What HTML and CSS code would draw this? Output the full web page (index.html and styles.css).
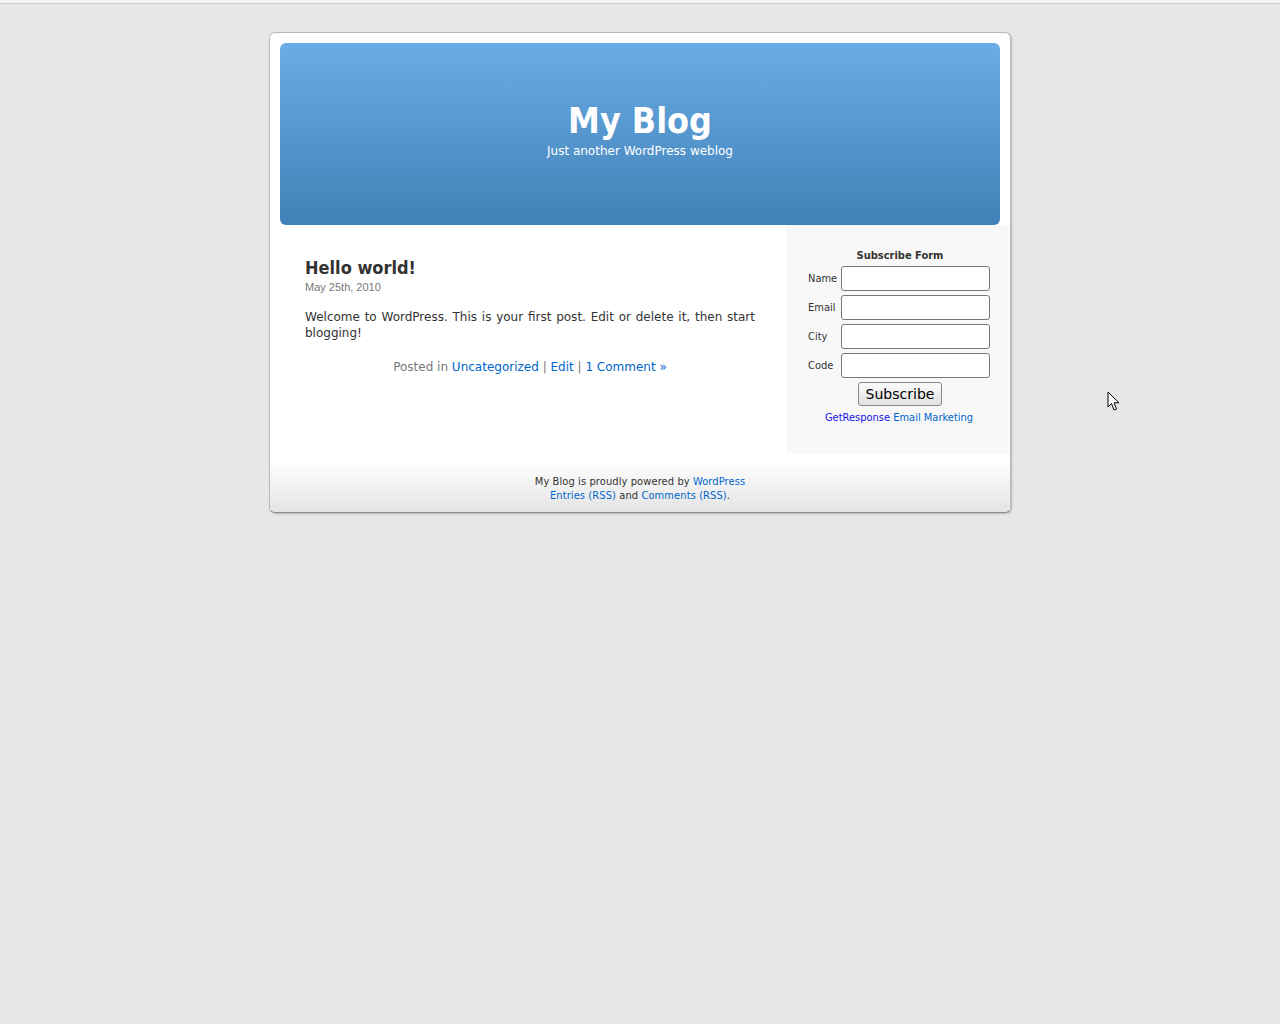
FILE: index.html
```html
<!DOCTYPE html>
<html lang="en">
<head>
<meta charset="utf-8">
<title>My Blog</title>
<link rel="stylesheet" href="styles.css">
</head>
<body>
<div class="topline"></div>
<div class="page">
  <header class="header">
    <h1 class="blog-title">My Blog</h1>
    <div class="blog-desc">Just another WordPress weblog</div>
  </header>
  <div class="columns">
    <main class="content">
      <article class="post">
        <h2 class="post-title">Hello world!</h2>
        <div class="post-date">May 25th, 2010</div>
        <p class="post-entry">Welcome to WordPress. This is your first post. Edit or delete it, then start blogging!</p>
        <p class="post-meta">Posted in <a href="#">Uncategorized</a> | <a href="#">Edit</a> | <a href="#">1 Comment »</a></p>
      </article>
    </main>
    <aside class="sidebar">
      <form class="subscribe">
        <div class="sub-title">Subscribe Form</div>
        <div class="field"><label>Name</label><input type="text"></div>
        <div class="field"><label>Email</label><input type="text"></div>
        <div class="field"><label>City</label><input type="text"></div>
        <div class="field"><label>Code</label><input type="text"></div>
        <div class="submit-row"><button type="button" class="sub-btn">Subscribe</button></div>
        <div class="credit"><a class="gr" href="#">GetResponse</a> <a href="#">Email Marketing</a></div>
      </form>
    </aside>
  </div>
  <footer class="footer">
    <p>My Blog is proudly powered by <a href="#">WordPress</a><br><a href="#">Entries (RSS)</a> and <a href="#">Comments (RSS)</a>.</p>
  </footer>
</div>
<svg class="cursor" width="13" height="21" viewBox="0 0 13 21"><path d="M1 1 L1 16 L4.5 12.5 L7 19 L9.5 18 L7 11.8 L12 11.8 Z" fill="#fff" stroke="#000" stroke-width="1" stroke-linejoin="miter"/></svg>
</body>
</html>
```
FILE: styles.css
```css
html, body {
  margin: 0;
  padding: 0;
}
body {
  background: #e7e7e7;
  font-family: "DejaVu Sans", Verdana, sans-serif;
  color: #333;
  min-height: 1024px;
  position: relative;
}
a {
  color: #0066cc;
  text-decoration: none;
}
.topline {
  height: 3px;
  background: #f2f2f2;
  border-bottom: 1px solid #cdcdcd;
}
.page {
  width: 740px;
  margin: 28px auto 0;
  background: #fff;
  border: 1px solid #b9b9b9;
  border-bottom-color: #8c8c8c;
  border-radius: 6px;
  box-shadow: 1px 1px 2px rgba(0, 0, 0, 0.22);
  padding-top: 10px;
  overflow: hidden;
}
.header {
  margin: 0 10px;
  height: 182px;
  border-radius: 6px;
  background: linear-gradient(#69ace6, #4281b7);
  text-align: center;
  color: #fff;
  box-sizing: border-box;
  padding-top: 55px;
}
.blog-title {
  margin: 0;
  font-family: "DejaVu Sans Condensed", "DejaVu Sans", sans-serif;
  font-weight: bold;
  font-size: 35.5px;
  line-height: 46px;
  letter-spacing: 0;
}
.blog-desc {
  font-size: 12px;
  line-height: 16px;
  margin-top: -1px;
}
.columns {
  display: flex;
  align-items: flex-start;
}
.content {
  width: 450px;
  padding: 31px 32px 0 35px;
  flex: none;
}
.post-title {
  margin: 0;
  font-family: "DejaVu Sans Condensed", "DejaVu Sans", sans-serif;
  font-size: 18px;
  line-height: 24px;
  font-weight: bold;
  color: #333;
}
.post-date {
  font-family: "Liberation Sans", Arial, sans-serif;
  font-size: 11px;
  line-height: 13px;
  color: #777;
  margin-top: 1px;
}
.post-entry {
  margin: 15px 0 0;
  font-size: 12px;
  line-height: 16px;
  text-align: justify;
}
.post-meta {
  margin: 18px 0 0;
  font-size: 12px;
  line-height: 16px;
  color: #777;
  text-align: center;
}
.sidebar {
  flex: none;
  width: 222px;
  background: #f8f8f8;
  box-sizing: border-box;
  padding: 24px 19px 29px 21px;
}
.subscribe {
  margin: 0;
  font-family: "DejaVu Sans Condensed", "DejaVu Sans", sans-serif;
  font-size: 11px;
}
.sub-title {
  font-weight: bold;
  text-align: center;
  line-height: 14px;
  margin-bottom: 3px;
  padding-left: 2px;
}
.field {
  display: flex;
  align-items: center;
  justify-content: space-between;
  margin-bottom: 4px;
}
.field label {
  font-size: 11px;
  color: #333;
}
.field input {
  width: 149px;
  height: 25px;
  box-sizing: border-box;
  border: 1px solid #777;
  border-radius: 3px;
  background: #fff;
  margin: 0;
}
.submit-row {
  text-align: center;
}
.sub-btn {
  font-family: "DejaVu Sans", sans-serif;
  font-size: 14px;
  height: 24px;
  padding: 0 7px;
  border: 1px solid #888;
  border-radius: 3px;
  background: linear-gradient(#fbfbfb, #e2e2e2);
  color: #000;
  margin-left: 2px;
}
.credit {
  text-align: center;
  margin-top: 5px;
  line-height: 14px;
}
.credit .gr {
  color: #1515ee;
}
.footer {
  height: 58px;
  background: linear-gradient(#ffffff 0, #ffffff 6px, #e4e4e4 100%);
  text-align: center;
  box-sizing: border-box;
  padding-top: 21px;
}
.footer p {
  margin: 0;
  font-family: "DejaVu Sans Condensed", "DejaVu Sans", sans-serif;
  font-size: 11px;
  line-height: 14px;
  color: #333;
  letter-spacing: 0.1px;
}
.cursor {
  position: absolute;
  left: 1107px;
  top: 391px;
}
```
